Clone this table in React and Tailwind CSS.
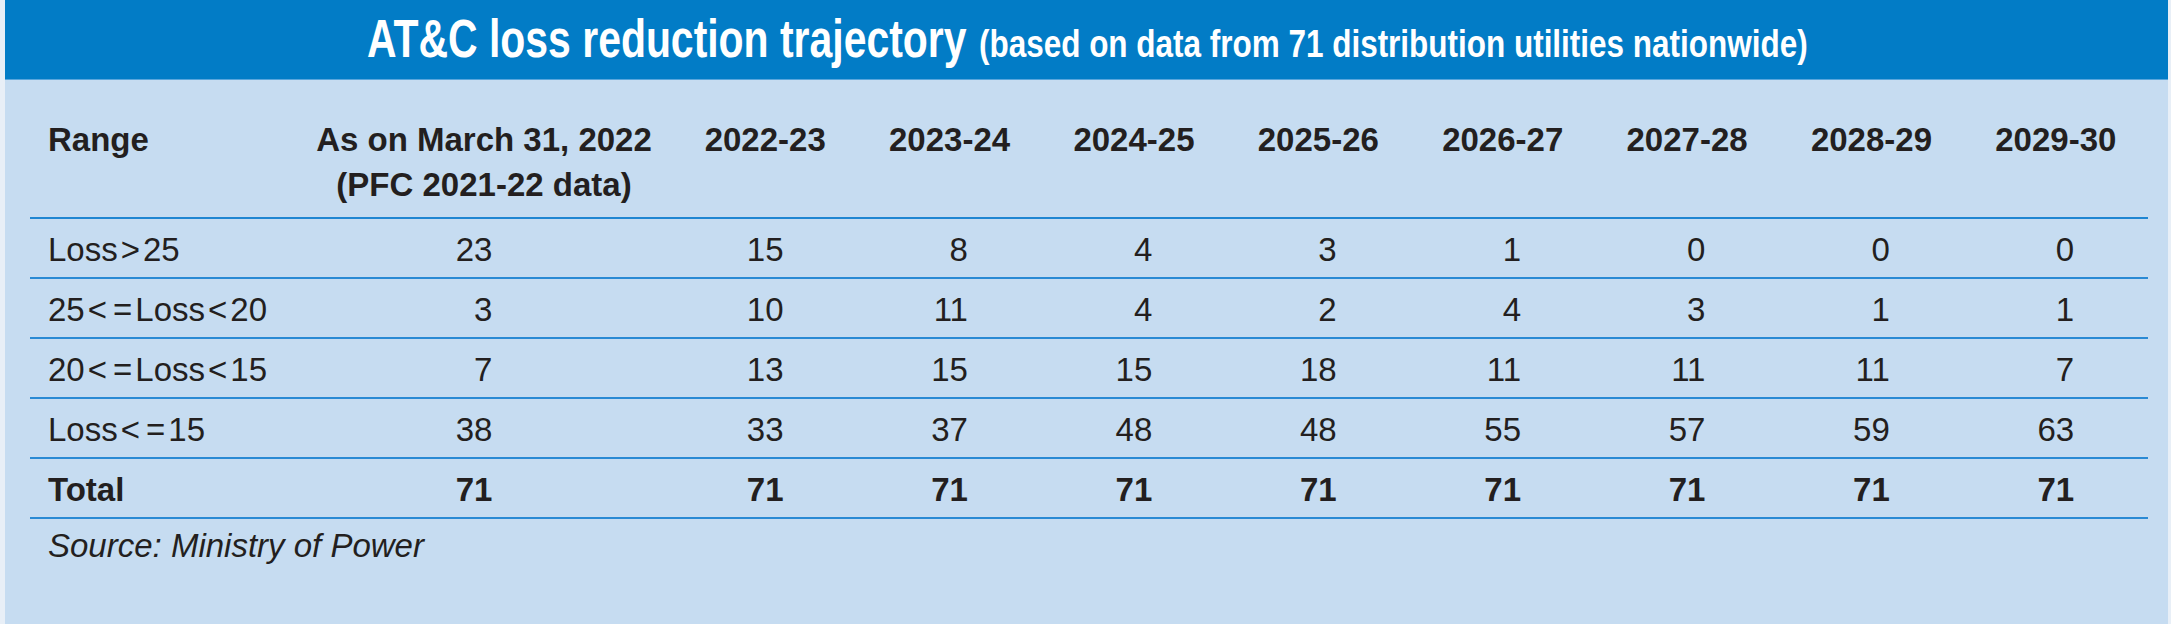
import React from "react";

const years = ["2022-23", "2023-24", "2024-25", "2025-26", "2026-27", "2027-28", "2028-29", "2029-30"];

const rows = [
  { label: "Loss>25", vals: [23, 15, 8, 4, 3, 1, 0, 0, 0] },
  { label: "25<=Loss<20", vals: [3, 10, 11, 4, 2, 4, 3, 1, 1] },
  { label: "20<=Loss<15", vals: [7, 13, 15, 15, 18, 11, 11, 11, 7] },
  { label: "Loss<=15", vals: [38, 33, 37, 48, 48, 55, 57, 59, 63] },
  { label: "Total", vals: [71, 71, 71, 71, 71, 71, 71, 71, 71], bold: true },
];

const grid = "grid grid-cols-[265px_378px_repeat(8,1fr)]";

function Label({ text }) {
  const parts = text.split(/([<>=])/).filter((p) => p !== "");
  return (
    <>
      {parts.map((p, i) =>
        /[<>=]/.test(p) ? (
          <span key={i} className="mx-[3px]">
            {p}
          </span>
        ) : (
          <span key={i}>{p}</span>
        )
      )}
    </>
  );
}

export default function App() {
  return (
    <div
      className="w-[2171px] h-[624px] bg-[#e8eff7] pl-[5px] pr-[3px] text-[#231f20]"
      style={{ fontFamily: '"Liberation Sans", Arial, Helvetica, sans-serif' }}
    >
      <div className="h-full bg-[#c6dcf1] flex flex-col">
        <div className="h-[80px] shrink-0 bg-[#027cc6] border-b border-[#5aa6dc] flex justify-center items-baseline pt-[12px] text-white font-bold whitespace-nowrap">
          <span className="inline-block w-[602px]">
            <span className="inline-block origin-left scale-x-[0.772] text-[53px] leading-none">
              AT&amp;C loss reduction trajectory
            </span>
          </span>
          <span className="inline-block w-[828px] ml-[10px]">
            <span className="inline-block origin-left scale-x-[0.828] text-[38px] leading-none">
              (based on data from 71 distribution utilities nationwide)
            </span>
          </span>
        </div>

        <div className="pl-[25px]">
          <div className="w-[2118px] text-[33px]">
            <div className={`${grid} pt-[37px] pb-[10px] border-b-2 border-[#1f86d2] font-bold leading-[45px]`}>
              <div className="pl-[18px]">Range</div>
              <div className="text-center">
                <div>As on March 31, 2022</div>
                <div>(PFC 2021-22 data)</div>
              </div>
              {years.map((y) => (
                <div key={y} className="text-center">
                  {y}
                </div>
              ))}
            </div>

            {rows.map((r) => (
              <div
                key={r.label}
                className={`${grid} h-[60px] items-center pt-[3px] border-b-2 border-[#2a8ad4] leading-[45px] ${r.bold ? "font-bold" : ""}`}
              >
                <div className="pl-[18px] whitespace-nowrap">
                  <Label text={r.label} />
                </div>
                {r.vals.map((v, i) => (
                  <div key={i} className={`text-center ${i === 0 ? "pr-[20px]" : ""}`}>
                    <span className="inline-block w-[2ch] text-right">{v}</span>
                  </div>
                ))}
              </div>
            ))}

            <div className="pl-[18px] pt-[4px] italic leading-[45px]">Source: Ministry of Power</div>
          </div>
        </div>
      </div>
    </div>
  );
}
